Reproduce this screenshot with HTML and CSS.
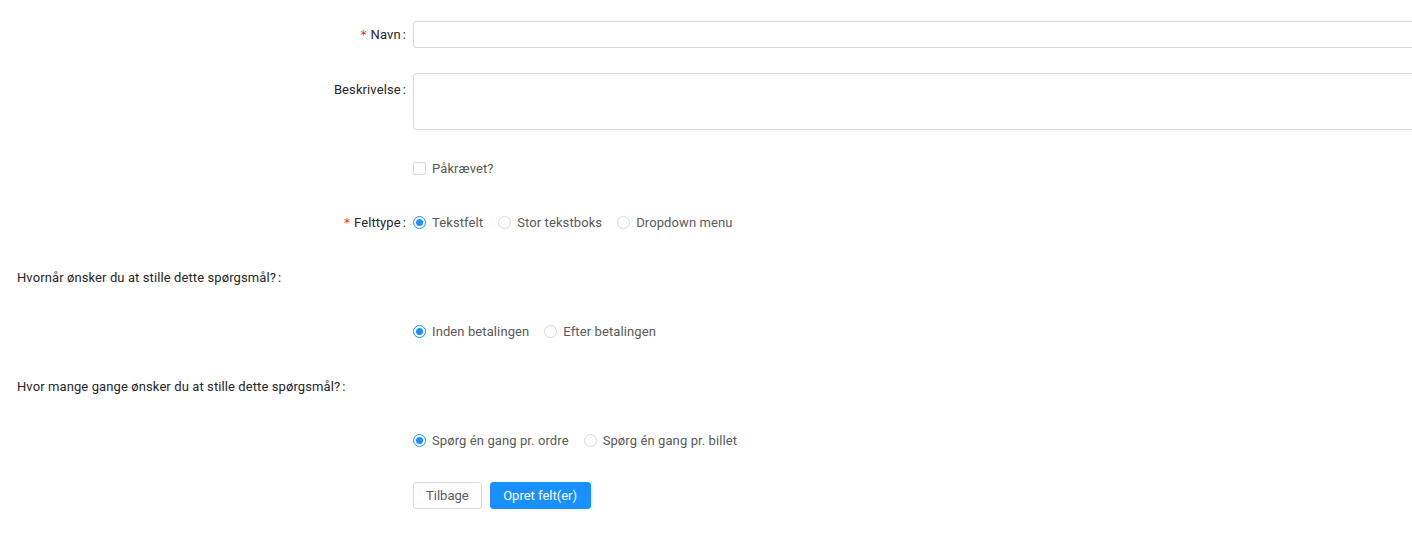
FILE: index.html
```html
<!DOCTYPE html>
<html lang="da">
<head>
<meta charset="utf-8">
<title>Opret felt</title>
<link rel="stylesheet" href="styles.css">
</head>
<body>
<form class="form">
  <div class="row row-first">
    <div class="label"><span class="req">*</span>Navn</div>
    <div class="control"><input class="input" type="text"></div>
  </div>

  <div class="row row-tall row-g25">
    <div class="label label-top">Beskrivelse</div>
    <div class="control control-top"><textarea class="textarea"></textarea></div>
  </div>

  <div class="row row-g25">
    <div class="label label-empty"></div>
    <div class="control">
      <label class="option"><span class="checkbox"></span><span class="option-text">Påkrævet?</span></label>
    </div>
  </div>

  <div class="row">
    <div class="label"><span class="req">*</span>Felttype</div>
    <div class="control">
      <label class="option"><span class="radio checked"></span><span class="option-text">Tekstfelt</span></label>
      <label class="option"><span class="radio"></span><span class="option-text">Stor tekstboks</span></label>
      <label class="option"><span class="radio"></span><span class="option-text">Dropdown menu</span></label>
    </div>
  </div>

  <div class="row row-g28">
    <div class="wide-label">Hvornår ønsker du at stille dette spørgsmål?</div>
  </div>

  <div class="row">
    <div class="label label-empty"></div>
    <div class="control">
      <label class="option"><span class="radio checked"></span><span class="option-text">Inden betalingen</span></label>
      <label class="option"><span class="radio"></span><span class="option-text">Efter betalingen</span></label>
    </div>
  </div>

  <div class="row row-g28">
    <div class="wide-label">Hvor mange gange ønsker du at stille dette spørgsmål?</div>
  </div>

  <div class="row">
    <div class="label label-empty"></div>
    <div class="control">
      <label class="option"><span class="radio checked"></span><span class="option-text">Spørg én gang pr. ordre</span></label>
      <label class="option"><span class="radio"></span><span class="option-text">Spørg én gang pr. billet</span></label>
    </div>
  </div>

  <div class="row row-g28">
    <div class="label label-empty"></div>
    <div class="control buttons">
      <button type="button" class="btn">Tilbage</button>
      <button type="button" class="btn btn-primary">Opret felt(er)</button>
    </div>
  </div>
</form>
</body>
</html>
```

FILE: styles.css
```css
html, body {
  margin: 0;
  padding: 0;
  background: #ffffff;
  overflow: hidden;
}

body {
  font-family: Roboto, "Liberation Sans", Arial, sans-serif;
  font-size: 13px;
  letter-spacing: 0.1px;
  color: #262626;
}

.form {
  display: flex;
  flex-direction: column;
  padding-top: 21px;
}

.row {
  display: flex;
  align-items: center;
  height: 27px;
  margin-top: 27px;
}

.row-first {
  margin-top: 0;
}

.row-g25 {
  margin-top: 25px;
}

.row-g28 {
  margin-top: 28px;
}

.row-tall {
  height: 57px;
  align-items: flex-start;
}

.label {
  width: 413px;
  flex: none;
  box-sizing: border-box;
  text-align: right;
  color: #262626;
  line-height: 27px;
  white-space: nowrap;
}

.label::after {
  content: ":";
  margin: 0 7px 0 2px;
}

.label-empty::after {
  content: "";
  margin: 0;
}

.label-top {
  line-height: 33px;
}

.req {
  color: #f5222d;
  margin-right: 4px;
  font-family: SimSun, "DejaVu Sans", sans-serif;
  font-size: 12px;
}

.wide-label {
  padding-left: 17px;
  color: #262626;
  line-height: 27px;
  white-space: nowrap;
}

.wide-label::after {
  content: ":";
  margin-left: 2px;
}

.control {
  flex: 1;
  display: flex;
  align-items: center;
  margin-right: -20px;
}

.control-top {
  align-items: flex-start;
}

.input,
.textarea {
  display: block;
  width: 100%;
  box-sizing: border-box;
  border: 1px solid #d9d9d9;
  border-radius: 3px;
  background: #fff;
  font: inherit;
  color: #595959;
  outline: none;
  margin: 0;
  padding: 4px 10px;
}

.input {
  height: 27px;
}

.textarea {
  height: 57px;
  resize: none;
}

.option {
  display: inline-flex;
  align-items: center;
  margin-right: 9px;
  cursor: pointer;
}

.option-text {
  padding: 0 6px;
  color: #595959;
  white-space: nowrap;
}

.checkbox {
  width: 13px;
  height: 13px;
  box-sizing: border-box;
  border: 1px solid #d9d9d9;
  border-radius: 2px;
  background: #fff;
}

.radio {
  position: relative;
  width: 13px;
  height: 13px;
  box-sizing: border-box;
  border: 1px solid #d9d9d9;
  border-radius: 50%;
  background: #fff;
}

.radio.checked {
  border-color: #1890ff;
}

.radio.checked::after {
  content: "";
  position: absolute;
  left: 2px;
  top: 2px;
  width: 7px;
  height: 7px;
  border-radius: 50%;
  background: #1890ff;
}

.buttons {
  gap: 8px;
}

.btn {
  height: 27px;
  padding: 0 12px;
  box-sizing: border-box;
  border: 1px solid #d9d9d9;
  border-radius: 3px;
  background: #fff;
  color: #595959;
  font: inherit;
  cursor: pointer;
}

.btn-primary {
  padding: 0 12.5px;
  background: #1890ff;
  border-color: #1890ff;
  color: #fff;
}
```
